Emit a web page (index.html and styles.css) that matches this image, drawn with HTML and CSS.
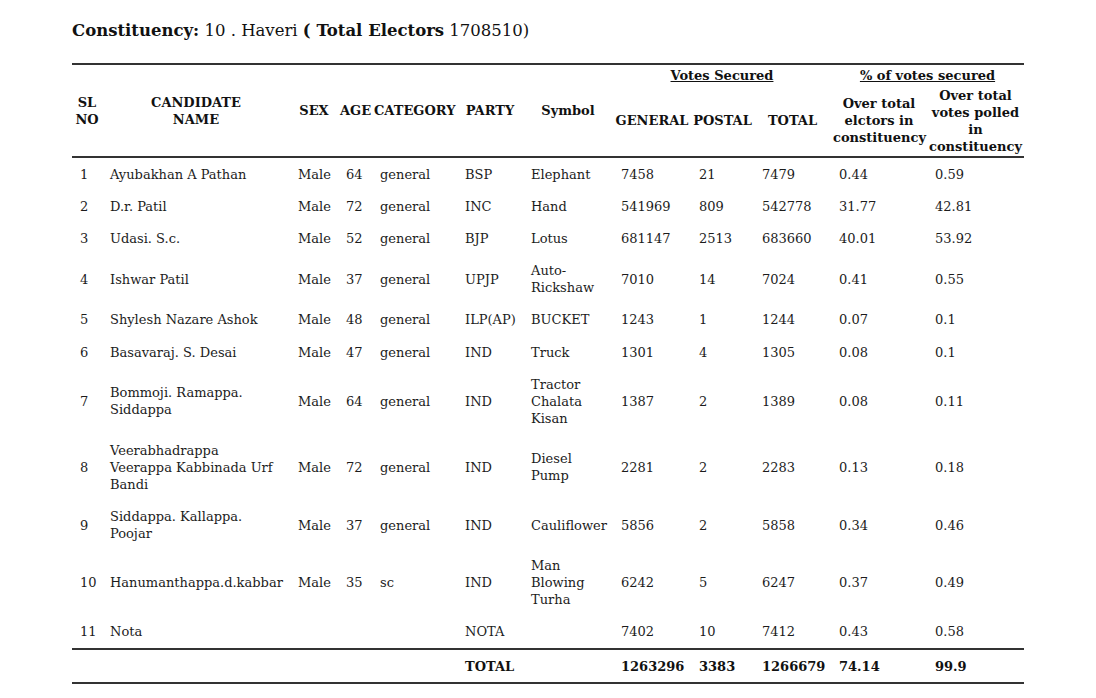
FILE: index.html
```html
<!DOCTYPE html>
<html>
<head>
<meta charset="utf-8">
<title>Constituency Result</title>
<link rel="stylesheet" href="styles.css">
</head>
<body>
<div class="page">
  <h2 class="title"><b>Constituency:</b> 10 . Haveri <b>( Total Electors</b> 1708510)</h2>
  <table class="results">
    <colgroup>
      <col class="c-sl"><col class="c-name"><col class="c-sex"><col class="c-age"><col class="c-cat"><col class="c-party"><col class="c-sym"><col class="c-gen"><col class="c-post"><col class="c-tot"><col class="c-pe"><col class="c-pp">
    </colgroup>
    <thead>
      <tr class="h1">
        <th rowspan="2">SL<br>NO</th>
        <th rowspan="2">CANDIDATE<br>NAME</th>
        <th rowspan="2">SEX</th>
        <th rowspan="2">AGE</th>
        <th rowspan="2">CATEGORY</th>
        <th rowspan="2">PARTY</th>
        <th rowspan="2">Symbol</th>
        <th colspan="3" class="ul">Votes Secured</th>
        <th colspan="2" class="ul">% of votes secured</th>
      </tr>
      <tr class="h2">
        <th>GENERAL</th>
        <th>POSTAL</th>
        <th>TOTAL</th>
        <th>Over total elctors in constituency</th>
        <th>Over total votes polled in constituency</th>
      </tr>
    </thead>
    <tbody>
      <tr><td>1</td><td>Ayubakhan A Pathan</td><td>Male</td><td>64</td><td>general</td><td>BSP</td><td>Elephant</td><td>7458</td><td>21</td><td>7479</td><td>0.44</td><td>0.59</td></tr>
      <tr><td>2</td><td>D.r. Patil</td><td>Male</td><td>72</td><td>general</td><td>INC</td><td>Hand</td><td>541969</td><td>809</td><td>542778</td><td>31.77</td><td>42.81</td></tr>
      <tr><td>3</td><td>Udasi. S.c.</td><td>Male</td><td>52</td><td>general</td><td>BJP</td><td>Lotus</td><td>681147</td><td>2513</td><td>683660</td><td>40.01</td><td>53.92</td></tr>
      <tr><td>4</td><td>Ishwar Patil</td><td>Male</td><td>37</td><td>general</td><td>UPJP</td><td>Auto-Rickshaw</td><td>7010</td><td>14</td><td>7024</td><td>0.41</td><td>0.55</td></tr>
      <tr><td>5</td><td>Shylesh Nazare Ashok</td><td>Male</td><td>48</td><td>general</td><td>ILP(AP)</td><td>BUCKET</td><td>1243</td><td>1</td><td>1244</td><td>0.07</td><td>0.1</td></tr>
      <tr><td>6</td><td>Basavaraj. S. Desai</td><td>Male</td><td>47</td><td>general</td><td>IND</td><td>Truck</td><td>1301</td><td>4</td><td>1305</td><td>0.08</td><td>0.1</td></tr>
      <tr><td>7</td><td>Bommoji. Ramappa. Siddappa</td><td>Male</td><td>64</td><td>general</td><td>IND</td><td>Tractor Chalata Kisan</td><td>1387</td><td>2</td><td>1389</td><td>0.08</td><td>0.11</td></tr>
      <tr><td>8</td><td>Veerabhadrappa Veerappa Kabbinada Urf Bandi</td><td>Male</td><td>72</td><td>general</td><td>IND</td><td>Diesel Pump</td><td>2281</td><td>2</td><td>2283</td><td>0.13</td><td>0.18</td></tr>
      <tr><td>9</td><td>Siddappa. Kallappa. Poojar</td><td>Male</td><td>37</td><td>general</td><td>IND</td><td>Cauliflower</td><td>5856</td><td>2</td><td>5858</td><td>0.34</td><td>0.46</td></tr>
      <tr><td>10</td><td>Hanumanthappa.d.kabbar</td><td>Male</td><td>35</td><td>sc</td><td>IND</td><td>Man Blowing Turha</td><td>6242</td><td>5</td><td>6247</td><td>0.37</td><td>0.49</td></tr>
      <tr><td>11</td><td>Nota</td><td></td><td></td><td></td><td>NOTA</td><td></td><td>7402</td><td>10</td><td>7412</td><td>0.43</td><td>0.58</td></tr>
    </tbody>
    <tfoot>
      <tr><td></td><td></td><td></td><td></td><td></td><td>TOTAL</td><td></td><td>1263296</td><td>3383</td><td>1266679</td><td>74.14</td><td>99.9</td></tr>
    </tfoot>
  </table>
</div>
</body>
</html>
```

FILE: styles.css
```css
html, body {
  margin: 0;
  padding: 0;
  background: #ffffff;
}

.page {
  padding: 21px 0 0 72px;
  font-family: "DejaVu Serif", serif;
  color: #1c1c1c;
}

.title {
  margin: 0 0 22px 0;
  font-size: 16.5px;
  line-height: 20px;
  font-weight: normal;
  color: #111111;
}

.title b {
  font-weight: bold;
}

.results {
  width: 952px;
  table-layout: fixed;
  border-collapse: collapse;
  font-size: 13px;
  line-height: 17px;
}

.c-sl { width: 30px; }
.c-name { width: 188px; }
.c-sex { width: 48px; }
.c-age { width: 34px; }
.c-cat { width: 85px; }
.c-party { width: 66px; }
.c-sym { width: 90px; }
.c-gen { width: 78px; }
.c-post { width: 63px; }
.c-tot { width: 77px; }
.c-pe { width: 96px; }
.c-pp { width: 97px; }

.results thead {
  border-top: 2px solid #333333;
  border-bottom: 2px solid #333333;
}

.results th {
  padding: 1.5px 2px;
  font-weight: bold;
  text-align: center;
  vertical-align: middle;
  color: #111111;
}

.results th.ul {
  text-decoration: underline;
}

.results td {
  padding: 7.6px 6px 7.6px 8px;
  text-align: left;
  vertical-align: middle;
}

.results tfoot {
  border-top: 2px solid #333333;
  border-bottom: 2px solid #333333;
}

.results tfoot td {
  font-weight: bold;
  color: #111111;
}
```
